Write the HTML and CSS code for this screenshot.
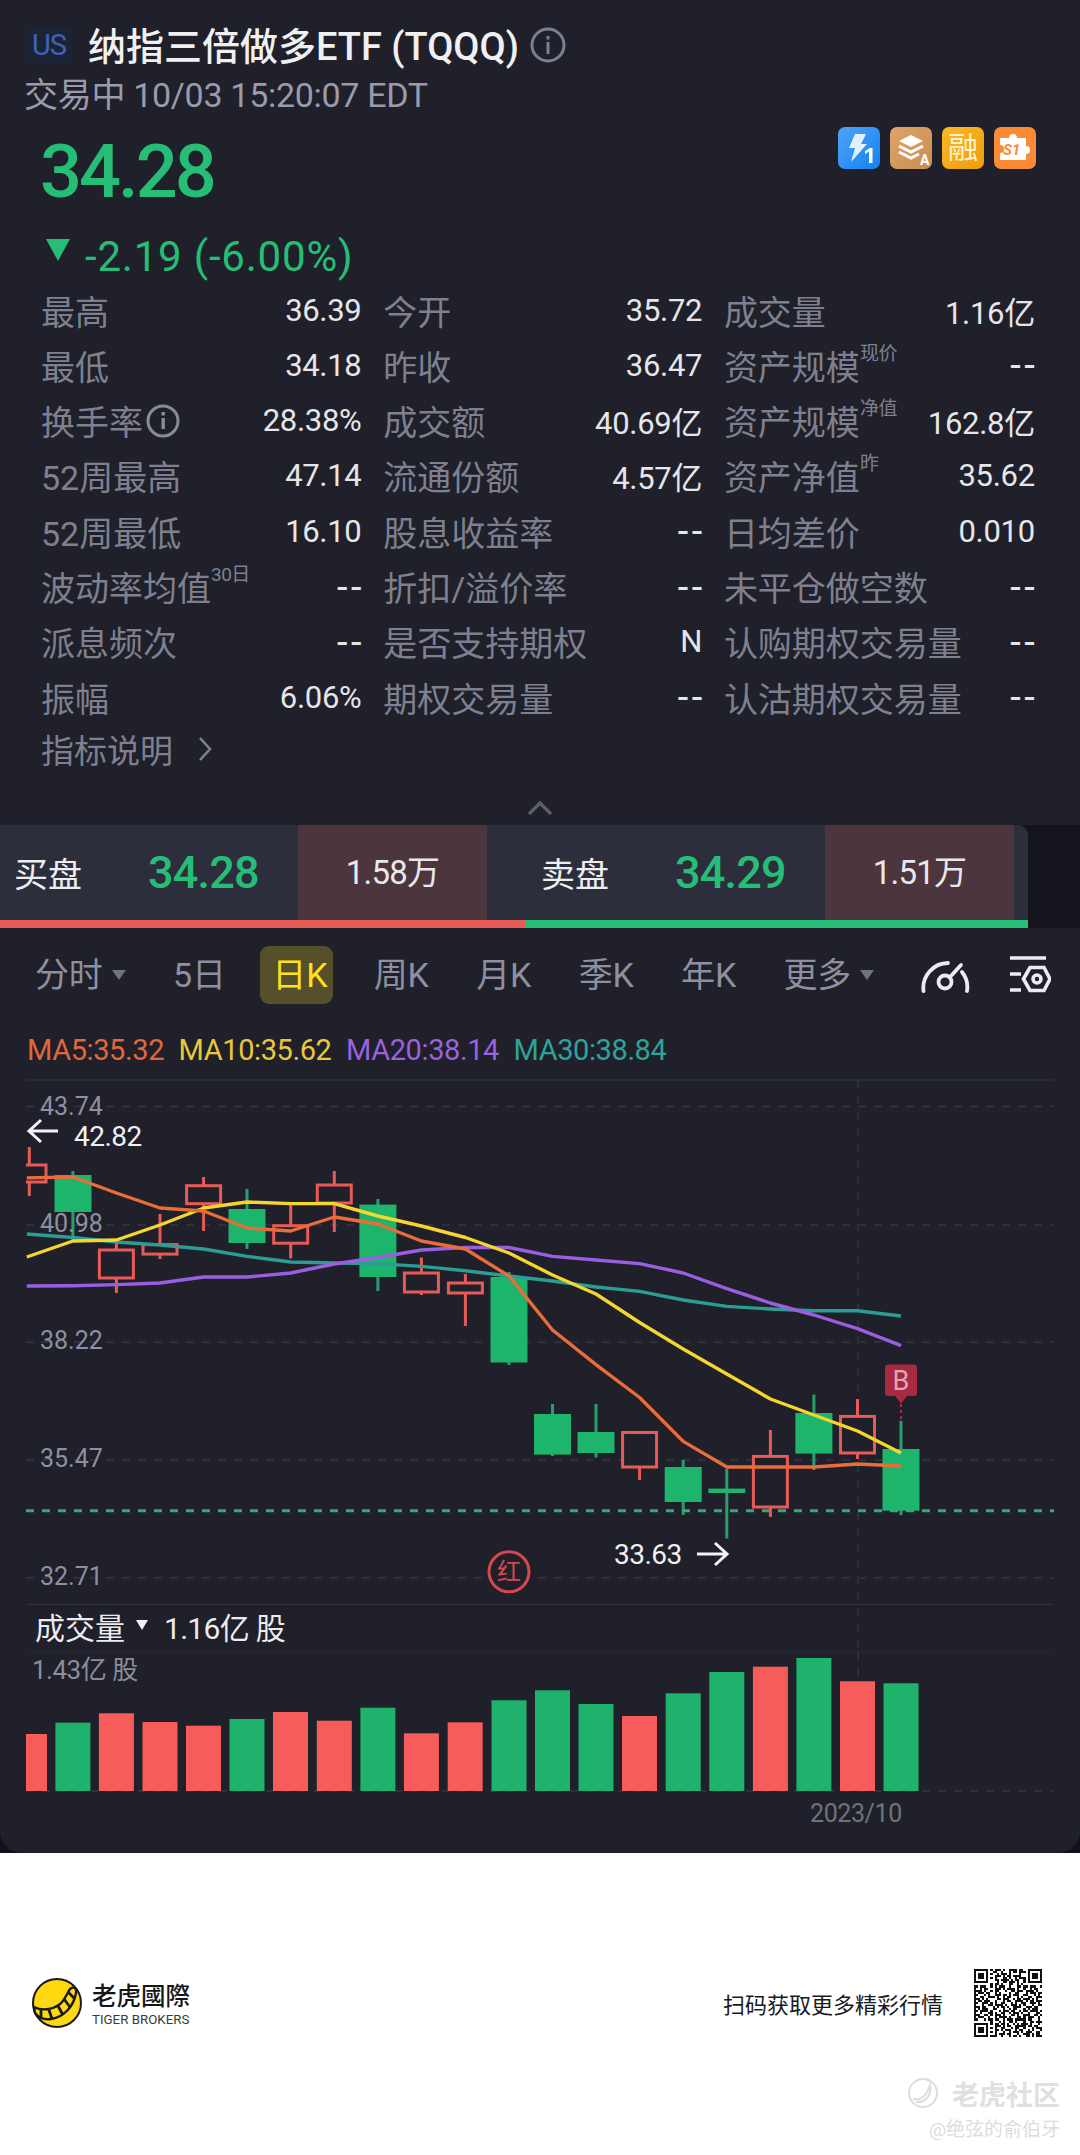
FILE: index.html
```html
<!DOCTYPE html>
<html lang="zh-CN">
<head>
    <meta charset="UTF-8">
    <meta name="viewport" content="width=device-width, initial-scale=1.0">
    <title>TQQQ 行情</title>
    <link rel="stylesheet" href="styles.css">
</head>
<body>
<div class="panel-back">
<div class="panel">
    <div class="title-row">
        <span class="market">US</span>
        <span class="name">纳指三倍做多ETF (TQQQ)</span>
        <svg class="info-big" viewBox="0 0 36 36"><circle cx="18" cy="18" r="16" fill="none" stroke="#7e8091" stroke-width="3"/><rect x="16.5" y="15" width="3" height="12" fill="#7e8091"/><rect x="16.5" y="9" width="3" height="3.5" fill="#7e8091"/></svg>
    </div>
    <div class="sub-row">交易中 10/03 15:20:07 EDT</div>

    <div class="price-row">
        <span class="price">34.28</span>
        <div class="badges">
            <span class="badge badge-blue">
                <svg viewBox="0 0 42 42"><path d="M17 7h11l-5 10h6L13 35l4-14h-6z" fill="#dff0ff"/><rect x="31" y="21" width="3.5" height="15" fill="#fff"/><path d="M27 24l5-3v3l-5 3z" fill="#fff"/></svg>
            </span>
            <span class="badge badge-tan">
                <svg viewBox="0 0 42 42"><path d="M21 8l12 6-12 6-12-6z" fill="#fff"/><path d="M9 19l12 6 12-6M9 25l12 6 8-4" fill="none" stroke="#fff" stroke-width="3"/><text x="30" y="38" class="badge-a">A</text></svg>
            </span>
            <span class="badge badge-gold">融</span>
            <span class="badge badge-orange">
                <svg viewBox="0 0 42 42"><path d="M6 11h9a4 4 0 0 1 8 0h9v8a4 4 0 0 1 0 8v6H6v-7a4 4 0 0 0 0-8z" fill="#fff"/><text x="9" y="28" class="badge-s">S1</text></svg>
            </span>
        </div>
    </div>

    <div class="change-row">
        <svg class="down-mark" viewBox="0 0 24 22"><path d="M0 0h24L12 22z" fill="#26bd77"/></svg>
        <span>-2.19 (-6.00%)</span>
    </div>

    <div class="stats">
        <div class="stat"><span class="lbl">最高</span><span class="val">36.39</span></div>
        <div class="stat"><span class="lbl">今开</span><span class="val">35.72</span></div>
        <div class="stat"><span class="lbl">成交量</span><span class="val">1.16亿</span></div>

        <div class="stat"><span class="lbl">最低</span><span class="val">34.18</span></div>
        <div class="stat"><span class="lbl">昨收</span><span class="val">36.47</span></div>
        <div class="stat"><span class="lbl">资产规模<sup>现价</sup></span><span class="val nil">--</span></div>

        <div class="stat"><span class="lbl lbl-icon">换手率<svg viewBox="0 0 34 34"><circle cx="17" cy="17" r="15" fill="none" stroke="#8a8b99" stroke-width="3"/><rect x="15.5" y="14" width="3.4" height="11" fill="#8a8b99"/><rect x="15.5" y="8" width="3.4" height="3.5" fill="#8a8b99"/></svg></span><span class="val">28.38%</span></div>
        <div class="stat"><span class="lbl">成交额</span><span class="val">40.69亿</span></div>
        <div class="stat"><span class="lbl">资产规模<sup>净值</sup></span><span class="val">162.8亿</span></div>

        <div class="stat"><span class="lbl">52周最高</span><span class="val">47.14</span></div>
        <div class="stat"><span class="lbl">流通份额</span><span class="val">4.57亿</span></div>
        <div class="stat"><span class="lbl">资产净值<sup>昨</sup></span><span class="val">35.62</span></div>

        <div class="stat"><span class="lbl">52周最低</span><span class="val">16.10</span></div>
        <div class="stat"><span class="lbl">股息收益率</span><span class="val nil">--</span></div>
        <div class="stat"><span class="lbl">日均差价</span><span class="val">0.010</span></div>

        <div class="stat"><span class="lbl">波动率均值<sup>30日</sup></span><span class="val nil">--</span></div>
        <div class="stat"><span class="lbl">折扣/溢价率</span><span class="val nil">--</span></div>
        <div class="stat"><span class="lbl">未平仓做空数</span><span class="val nil">--</span></div>

        <div class="stat"><span class="lbl">派息频次</span><span class="val nil">--</span></div>
        <div class="stat"><span class="lbl">是否支持期权</span><span class="val">N</span></div>
        <div class="stat"><span class="lbl">认购期权交易量</span><span class="val nil">--</span></div>

        <div class="stat"><span class="lbl">振幅</span><span class="val">6.06%</span></div>
        <div class="stat"><span class="lbl">期权交易量</span><span class="val nil">--</span></div>
        <div class="stat"><span class="lbl">认沽期权交易量</span><span class="val nil">--</span></div>
    </div>

    <div class="explain">指标说明
        <svg viewBox="0 0 16 26"><path d="M3 2l10 11L3 24" fill="none" stroke="#7e8090" stroke-width="2.6"/></svg>
    </div>

    <svg class="collapse" viewBox="0 0 26 14"><path d="M2 13L13 2l11 11" fill="none" stroke="#5b5d6b" stroke-width="3.4"/></svg>

    <div class="quote-wrap">
        <div class="quote">
            <div class="quote-cells">
                <div class="q-bid"><span class="q-name">买盘</span><span class="q-price">34.28</span></div>
                <div class="q-qty">1.58万</div>
                <div class="q-ask"><span class="q-name">卖盘</span><span class="q-price">34.29</span></div>
                <div class="q-qty q-qty-2">1.51万</div>
            </div>
            <div class="ratio"><span class="ratio-red"></span><span class="ratio-green"></span></div>
        </div>
    </div>

    <div class="tabs">
        <span class="tab">分时<i class="caret"></i></span>
        <span class="tab">5日</span>
        <span class="tab tab-on">日K</span>
        <span class="tab">周K</span>
        <span class="tab">月K</span>
        <span class="tab">季K</span>
        <span class="tab">年K</span>
        <span class="tab">更多<i class="caret"></i></span>
        <svg class="tool-gauge" viewBox="0 0 50 36"><g fill="none" stroke="#ececf0" stroke-width="3.8" stroke-linecap="round"><path d="M3.500 34A25 25 0 0 1 28 6"/><path d="M42 15A24 24 0 0 1 47 34"/><circle cx="25" cy="25" r="6.5"/><path d="M30 20L41 8"/></g></svg>
        <svg class="tool-set" viewBox="0 0 42 37"><g fill="none" stroke="#ececf0" stroke-width="3.6"><path d="M1 2h36M1 18h11M1 34h11"/><path d="M14.500 23L21 11.500h14L41 23l-6 11.500H21z"/><circle cx="28" cy="23" r="4"/></g></svg>
    </div>

    <div class="ma-row">
        <span class="ma5">MA5:35.32</span>
        <span class="ma10">MA10:35.62</span>
        <span class="ma20">MA20:38.14</span>
        <span class="ma30">MA30:38.84</span>
    </div>

    <svg class="chart" viewBox="0 1070 1080 535">
        <g class="grid-solid"><path d="M26 1080H1054M26 1604.500H1054"/></g>
        <g class="grid-dash"><path d="M26 1106.500H1054M26 1225H1054M26 1342H1054M26 1460H1054M26 1578H1054M858 1080V1652"/></g>

        <!-- candles -->
        <g class="wick-dn"><path d="M29.300 1147V1165M29.300 1182V1196M116.400 1242V1293M160 1214V1259M203.600 1177V1231M290.700 1203.600V1258.600M334.300 1171V1232M421.400 1257.500V1295M465.400 1274V1326M639.600 1432V1480M770.400 1430V1517M857.500 1399V1459"/></g>
        <g class="wick-up"><path d="M72.900 1171V1240M247 1189V1249M377.900 1199V1291M509 1272V1365M552.500 1404V1456M596 1404V1457.500M683.200 1460V1515M726.800 1469V1538.600M813.900 1394.600V1470M901 1420.700V1515"/></g>
        <path class="candle-dn" d="M26 1165H46V1182H26"/>
        <g class="candle-dn">
            <rect x="99.400" y="1250" width="34" height="28"/>
            <rect x="143" y="1244.600" width="34" height="9.500"/>
            <rect x="186.600" y="1185.700" width="34" height="18"/>
            <rect x="273.700" y="1225.700" width="34" height="17.500"/>
            <rect x="317.300" y="1185" width="34" height="18"/>
            <rect x="404.400" y="1273" width="34" height="19"/>
            <rect x="448.400" y="1283" width="34" height="10"/>
            <rect x="622.600" y="1432.500" width="34" height="34.500"/>
            <rect x="753.400" y="1456.400" width="34" height="50.600"/>
            <rect x="840.500" y="1416.400" width="34" height="36.600"/>
        </g>
        <g class="candle-up">
            <rect x="54.500" y="1175" width="37" height="37"/>
            <rect x="228.500" y="1209" width="37" height="34"/>
            <rect x="359.400" y="1204.600" width="37" height="72.400"/>
            <rect x="490.500" y="1277" width="37" height="85.500"/>
            <rect x="534" y="1414" width="37" height="40.600"/>
            <rect x="577.500" y="1432" width="37" height="21"/>
            <rect x="664.700" y="1467" width="37" height="35"/>
            <rect x="708.300" y="1488.600" width="37" height="4.400"/>
            <rect x="795.400" y="1413" width="37" height="40.600"/>
            <rect x="882.500" y="1449" width="37" height="61.700"/>
        </g>

        <!-- moving averages -->
        <polyline class="line line-ma30" points="26.800,1234 72.900,1237.500 116.400,1242 160,1245 203.600,1249 247,1256.400 290.700,1262 334.300,1263 377.900,1263.600 421.400,1266.400 465.400,1270.700 509,1276 552.500,1281 596,1287 639.600,1291.400 683.200,1300 726.800,1306.400 770.400,1309 813.900,1310.700 857.500,1310.700 901,1316"/>
        <polyline class="line line-ma20" points="26.800,1286 72.900,1285.700 116.400,1284.600 160,1283 203.600,1277 247,1277 290.700,1273 334.300,1264 377.900,1257.500 421.400,1250 465.400,1247.500 509,1247.500 552.500,1256.400 596,1260 639.600,1263.600 683.200,1273 726.800,1288.600 770.400,1303 813.900,1315 857.500,1328.600 901,1345.700"/>
        <polyline class="line line-ma10" points="26.800,1257 72.900,1241 116.400,1240 160,1225 203.600,1208 247,1202 290.700,1203.600 334.300,1203.600 377.900,1216 421.400,1226 465.400,1237.500 509,1253 552.500,1275 596,1294 639.600,1322.500 683.200,1349 726.800,1374 770.400,1399 813.900,1415 857.500,1431 901,1453"/>
        <polyline class="line line-ma5" points="26.800,1177.900 72.900,1177 116.400,1193 160,1208 203.600,1211 247,1228 290.700,1231 334.300,1217 377.900,1224 421.400,1241 465.400,1249 509,1276 552.500,1330 596,1364.600 639.600,1397.500 683.200,1441.400 726.800,1467 770.400,1467 813.900,1467 857.500,1464 901,1466"/>

        <path class="last-line" d="M26 1510.700H1054"/>

        <text class="axis" x="40" y="1115">43.74</text>
        <text class="axis" x="40" y="1232">40.98</text>
        <text class="axis" x="40" y="1349">38.22</text>
        <text class="axis" x="40" y="1467">35.47</text>
        <text class="axis" x="40" y="1585">32.71</text>

        <path class="arrow" d="M58 1131H30M41 1120L29 1131L41 1142"/>
        <text class="extreme" x="74" y="1146">42.82</text>
        <text class="extreme" x="614" y="1564">33.63</text>
        <path class="arrow" d="M697 1554H726M715 1543L727 1554L715 1565"/>

        <circle class="red-ring" cx="509" cy="1571.800" r="20"/>
        <text class="red-txt" x="509" y="1580" text-anchor="middle">红</text>

        <path class="buy-tick" d="M901 1404V1420"/>
        <path class="buy-mark" d="M888 1364.600H914a3 3 0 0 1 3 3V1393a3 3 0 0 1-3 3H907L901 1403.600L895 1396H888a3 3 0 0 1-3-3V1367.600a3 3 0 0 1 3-3z"/>
        <text class="buy-txt" x="901" y="1390" text-anchor="middle">B</text>
    </svg>

    <div class="vol-head">成交量<i class="vol-caret"></i><span>1.16亿 股</span></div>

    <svg class="vol" viewBox="0 1652 1080 200">
        <g class="vol-dash"><path d="M26 1791H1054M858 1652V1791"/></g>
        <g class="bar-red">
            <rect x="26" y="1734" width="21" height="57"/>
            <rect x="98.900" y="1713.300" width="35" height="77.700"/>
            <rect x="142.500" y="1722" width="35" height="69"/>
            <rect x="186" y="1725.700" width="35" height="65.300"/>
            <rect x="273" y="1712" width="35" height="79"/>
            <rect x="316.800" y="1720.700" width="35" height="70.300"/>
            <rect x="403.900" y="1733.300" width="35" height="57.700"/>
            <rect x="447.700" y="1722.300" width="35" height="68.700"/>
            <rect x="622" y="1716" width="35" height="75"/>
            <rect x="752.900" y="1666.700" width="35" height="124.300"/>
            <rect x="840" y="1681.300" width="35" height="109.700"/>
        </g>
        <g class="bar-green">
            <rect x="55.400" y="1722.700" width="35" height="68.300"/>
            <rect x="229.500" y="1719" width="35" height="72"/>
            <rect x="360.400" y="1707.700" width="35" height="83.300"/>
            <rect x="491.500" y="1700.300" width="35" height="90.700"/>
            <rect x="535" y="1690.300" width="35" height="100.700"/>
            <rect x="578.500" y="1704" width="35" height="87"/>
            <rect x="665.700" y="1693.300" width="35" height="97.700"/>
            <rect x="709.300" y="1672" width="35" height="119"/>
            <rect x="796.400" y="1658" width="35" height="133"/>
            <rect x="883.500" y="1683.300" width="35" height="107.700"/>
        </g>
        <text class="vol-max" x="32" y="1679">1.43亿 股</text>
        <text class="vol-date" x="810" y="1822">2023/10</text>
    </svg>
</div>
</div>

<div class="footer">
    <div class="brand-row">
        <div class="brand">
            <svg class="tiger" viewBox="0 0 50 50">
                <circle cx="25" cy="25" r="24" fill="#ffd80f" stroke="#1a1a1a" stroke-width="2"/>
                <path d="M2 29C10 33 20 32 28 26C33 22 35 15 38 11C42 8 45 10 44 15C42 27 33 39 19 41C13 42 7 40 3 35z" fill="#ffd80f" stroke="#1a1a1a" stroke-width="2.4"/>
                <path d="M9 31V40M17 32L20 41M26 28L31 37M32 21L38 29M36 14L42 20" stroke="#1a1a1a" stroke-width="2.8" fill="none"/>
            </svg>
            <div>
                <div class="brand-cn">老虎國際</div>
                <div class="brand-en">TIGER BROKERS</div>
            </div>
        </div>
        <div class="scan">
            <span>扫码获取更多精彩行情</span>
            <svg class="qr" viewBox="0 0 33 33" shape-rendering="crispEdges">
                <g fill="none" stroke="#111" stroke-width="1">
                    <path d="M0 .5h33" stroke-dasharray="2 1 1 3 2 1 3 1 1 2 4 1 2 2 1 3"/>
                    <path d="M0 1.500h33" stroke-dasharray="1 2 3 1 1 1 2 2 1 3 1 1 2 1 3 2"/>
                    <path d="M0 2.500h33" stroke-dasharray="3 1 1 2 2 2 1 1 3 1 1 4 1 2 1 1"/>
                    <path d="M0 3.500h33" stroke-dasharray="1 1 2 3 1 2 3 1 1 1 2 1 4 2"/>
                    <path d="M0 4.500h33" stroke-dasharray="2 2 1 1 3 1 1 3 2 1 1 2 1 1 3"/>
                    <path d="M0 5.500h33" stroke-dasharray="1 3 2 1 1 2 2 1 4 1 1 1 2 2"/>
                    <path d="M0 6.500h33" stroke-dasharray="3 2 1 1 1 3 1 2 2 1 3 1 1 2"/>
                    <path d="M0 7.500h33" stroke-dasharray="1 1 1 2 4 1 2 1 1 3 2 2 1 1"/>
                    <path d="M0 8.500h33" stroke-dasharray="2 1 3 2 1 1 1 1 3 2 1 3 2 1"/>
                    <path d="M0 9.500h33" stroke-dasharray="1 2 1 1 2 3 3 1 1 1 4 1 1 2"/>
                    <path d="M0 10.500h33" stroke-dasharray="4 1 1 2 1 1 2 3 1 2 2 1 3 1"/>
                    <path d="M0 11.500h33" stroke-dasharray="1 1 3 1 2 2 1 1 1 4 1 2 2 3"/>
                    <path d="M0 12.500h33" stroke-dasharray="2 3 1 1 1 2 3 1 2 1 1 1 3 2"/>
                    <path d="M0 13.500h33" stroke-dasharray="1 2 2 2 3 1 1 2 1 1 2 3 1 1"/>
                    <path d="M0 14.500h33" stroke-dasharray="3 1 1 1 1 4 2 1 3 2 1 1 2 1"/>
                    <path d="M0 15.500h33" stroke-dasharray="1 1 2 1 3 2 1 3 1 1 2 2 4 1"/>
                    <path d="M0 16.500h33" stroke-dasharray="2 2 3 1 1 1 1 2 2 3 1 1 1 2"/>
                    <path d="M0 17.500h33" stroke-dasharray="1 3 1 2 2 1 4 1 1 2 3 1 1 1"/>
                    <path d="M0 18.500h33" stroke-dasharray="3 1 2 3 1 1 1 1 2 1 1 2 4 2"/>
                    <path d="M0 19.500h33" stroke-dasharray="1 1 1 1 3 2 2 3 1 2 1 1 2 3"/>
                    <path d="M0 20.500h33" stroke-dasharray="2 1 4 1 1 3 1 1 3 1 2 2 1 1"/>
                    <path d="M0 21.500h33" stroke-dasharray="1 2 1 3 2 1 1 2 2 2 1 1 3 1"/>
                    <path d="M0 22.500h33" stroke-dasharray="3 2 2 1 1 1 3 1 1 3 2 1 1 2"/>
                    <path d="M0 23.500h33" stroke-dasharray="1 1 3 2 1 2 1 1 4 1 1 3 2 1"/>
                    <path d="M0 24.500h33" stroke-dasharray="2 3 1 1 2 1 2 2 1 1 3 1 5 1"/>
                    <path d="M0 25.500h33" stroke-dasharray="1 2 2 1 3 3 1 1 1 2 2 1 1 3"/>
                    <path d="M0 26.500h33" stroke-dasharray="3 1 1 3 1 1 2 1 2 1 1 2 1 1 1 1"/>
                    <path d="M0 27.500h33" stroke-dasharray="2 1 2 2 1 2 3 1 1 1 2 2 5 1"/>
                    <path d="M0 28.500h33" stroke-dasharray="1 3 1 1 3 1 1 2 2 3 1 1 2 2"/>
                    <path d="M0 29.500h33" stroke-dasharray="2 2 1 1 1 3 2 1 1 1 3 2 1 1"/>
                    <path d="M0 30.500h33" stroke-dasharray="1 1 3 2 2 1 1 3 1 2 1 1 3 1"/>
                    <path d="M0 31.500h33" stroke-dasharray="3 1 1 1 2 2 1 1 3 1 2 3 1 2"/>
                    <path d="M0 32.500h33" stroke-dasharray="1 2 2 1 1 1 3 2 1 3 1 1 2 1"/>
                </g>
                <g class="qr-finder">
                    <rect x="0" y="0" width="8" height="8" fill="#fff"/><rect x=".5" y=".5" width="6" height="6" fill="none" stroke="#111"/><rect x="2" y="2" width="3" height="3" fill="#111"/>
                    <rect x="25" y="0" width="8" height="8" fill="#fff"/><rect x="26.500" y=".5" width="6" height="6" fill="none" stroke="#111"/><rect x="28" y="2" width="3" height="3" fill="#111"/>
                    <rect x="0" y="25" width="8" height="8" fill="#fff"/><rect x=".5" y="26.500" width="6" height="6" fill="none" stroke="#111"/><rect x="2" y="28" width="3" height="3" fill="#111"/>
                </g>
            </svg>
        </div>
    </div>
    <div class="mark-row">
        <svg class="mark-icon" viewBox="0 0 32 32"><g fill="none" stroke="#dcdcdc" stroke-width="2"><circle cx="16" cy="16" r="14"/><path d="M6 22C14 24 20 18 23 8C25 16 20 26 9 25"/></g></svg>
        <span>老虎社区</span>
    </div>
    <div class="mark-user">@绝弦的俞伯牙</div>
</div>
</body>
</html>
```

FILE: styles.css
```css
* {
    box-sizing: border-box;
}
html, body {
    margin: 0;
    padding: 0;
}
body {
    width: 1080px;
    height: 2155px;
    overflow: hidden;
    background: #fff;
    font-family: Roboto, "Noto Sans CJK SC", sans-serif;
}
.panel-back {
    background: #11121a;
}
.panel {
    height: 1853px;
    padding-top: 25px;
    background: #1f2029;
    border-radius: 0 0 22px 22px;
    overflow: hidden;
}

/* header */
.title-row {
    display: flex;
    align-items: center;
    height: 40px;
    padding-left: 25px;
}
.market {
    width: 48px;
    height: 36px;
    line-height: 36px;
    margin-right: 15px;
    text-align: center;
    font-size: 29px;
    color: #3f62b8;
    background: #1c2334;
    border-radius: 4px;
    letter-spacing: -1px;
}
.name {
    margin-top: -3px;
    font-size: 38px;
    font-weight: 500;
    color: #f0f0f3;
    white-space: nowrap;
}
.info-big {
    width: 36px;
    height: 36px;
    margin-left: 11px;
}
.sub-row {
    margin-top: 11px;
    padding-left: 24px;
    height: 39px;
    line-height: 39px;
    font-size: 34px;
    color: #9a9bac;
    letter-spacing: -0.3px;
}
.price-row {
    display: flex;
    justify-content: space-between;
    margin-top: 12px;
    padding: 0 44px 0 40px;
    height: 90px;
}
.price {
    font-size: 74px;
    line-height: 90px;
    font-weight: 500;
    color: #26bd77;
    letter-spacing: -3px;
}
.badges {
    display: flex;
    gap: 10px;
}
.badge {
    display: block;
    width: 42px;
    height: 42px;
    border-radius: 7px;
    overflow: hidden;
}
.badge svg {
    display: block;
    width: 42px;
    height: 42px;
}
.badge-blue {
    background: linear-gradient(135deg, #52a3f5, #1282f5);
}
.badge-tan {
    background: linear-gradient(135deg, #dea468, #c98f52);
}
.badge-gold {
    background: linear-gradient(135deg, #fbb726, #ee9d0c);
    color: #fff3cf;
    font-size: 30px;
    line-height: 42px;
    text-align: center;
}
.badge-orange {
    background: #fb8a36;
}
.badge-a {
    font-size: 14px;
    font-weight: 700;
    fill: #fff;
}
.badge-s {
    font-size: 15px;
    font-weight: 700;
    font-style: italic;
    fill: #fb8a36;
}
.change-row {
    display: flex;
    align-items: center;
    margin-top: 17px;
    height: 44px;
    padding-left: 46px;
    font-size: 42px;
    color: #26bd77;
    letter-spacing: 0.8px;
    white-space: nowrap;
}
.down-mark {
    width: 24px;
    height: 22px;
    margin: -12px 15px 0 0;
}

/* stats table */
.stats {
    display: grid;
    grid-template-columns: 320.5px 319px 311px;
    column-gap: 21.7px;
    grid-auto-rows: 55.3px;
    margin-top: 4.4px;
    padding-left: 41px;
}
.stat {
    display: flex;
    justify-content: space-between;
    align-items: center;
    white-space: nowrap;
}
.lbl {
    font-size: 34px;
    color: #7e8090;
}
.lbl sup {
    font-size: 19px;
    line-height: 0;
    vertical-align: 20px;
    letter-spacing: -0.5px;
}
.lbl-icon {
    display: flex;
    align-items: center;
}
.lbl-icon svg {
    width: 34px;
    height: 34px;
    margin-left: 3px;
}
.val {
    font-size: 31px;
    color: #e6e6ea;
    letter-spacing: -0.3px;
}
.nil {
    font-size: 38px;
    line-height: 1;
    letter-spacing: 3.5px;
    margin-right: -3.5px;
}
.explain {
    display: flex;
    align-items: center;
    margin-top: 4px;
    height: 40px;
    padding-left: 41px;
    font-size: 33px;
    color: #7e8090;
}
.explain svg {
    width: 16px;
    height: 26px;
    margin-left: 24px;
}
.collapse {
    display: block;
    width: 26px;
    height: 14px;
    margin: 32px 0 0 527px;
}

/* bid and ask */
.quote-wrap {
    margin-top: 10px;
    background: #14151c;
    height: 103px;
}
.quote {
    width: 1028px;
}
.quote-cells {
    display: flex;
    height: 95px;
    background: #2d2e3c;
    border-radius: 0 10px 0 0;
}
.q-bid,
.q-ask {
    display: flex;
    align-items: center;
}
.q-bid {
    width: 298px;
    padding-left: 14px;
}
.q-ask {
    width: 338px;
    padding-left: 54px;
}
.q-name {
    width: 134px;
    font-size: 34px;
    color: #eeeef1;
}
.q-price {
    font-size: 45px;
    font-weight: 500;
    color: #26bd77;
    letter-spacing: -0.8px;
}
.q-qty {
    width: 189px;
    line-height: 95px;
    text-align: center;
    font-size: 33px;
    color: #e8e8ec;
    background: #4d353e;
    letter-spacing: -0.8px;
}
.ratio {
    display: flex;
    height: 8px;
}
.ratio-red {
    width: 525px;
    background: #e85a58;
}
.ratio-green {
    flex: 1;
    background: #26bd77;
}

/* period tabs */
.tabs {
    display: flex;
    align-items: center;
    gap: 47.5px;
    margin-top: 18px;
    padding-left: 35px;
    height: 58px;
}
.tab {
    display: flex;
    align-items: center;
    font-size: 34px;
    line-height: 58px;
    color: #8e90a2;
    white-space: nowrap;
    letter-spacing: -0.2px;
}
.tab-on {
    margin: 0 -7px 0 -13px;
    padding: 0 6px 0 12px;
    border-radius: 9px;
    background: #56502a;
    color: #ffe11f;
}
.caret {
    width: 0;
    height: 0;
    margin: 0 0 0 9px;
    border-left: 7px solid transparent;
    border-right: 7px solid transparent;
    border-top: 10px solid #70727f;
}
.tool-gauge {
    width: 50px;
    height: 36px;
    margin: 0 -8px 0 -2px;
}
.tool-set {
    width: 42px;
    height: 37px;
}
.ma-row {
    display: flex;
    gap: 14.5px;
    margin-top: 26px;
    padding-left: 27px;
    height: 40px;
    line-height: 40px;
    font-size: 29px;
    letter-spacing: -0.4px;
    white-space: nowrap;
}
.ma5 { color: #e0683a; }
.ma10 { color: #e9c83c; }
.ma20 { color: #9a62dc; }
.ma30 { color: #2fa39a; }

/* chart */
.chart {
    display: block;
    width: 1080px;
    height: 535px;
    overflow: visible;
}
.grid-solid path {
    fill: none;
    stroke: #2d2e38;
    stroke-width: 1.5;
}
.grid-dash path {
    fill: none;
    stroke: #33343f;
    stroke-width: 1.5;
    stroke-dasharray: 8 8;
}
.wick-dn path {
    stroke: #e85a58;
    stroke-width: 3;
    fill: none;
}
.wick-up path {
    stroke: #2b9c6c;
    stroke-width: 3;
    fill: none;
}
.candle-dn {
    fill: #1f2029;
    stroke: #e85a58;
    stroke-width: 3;
}
.candle-up {
    fill: #1db46c;
}
.line {
    fill: none;
    stroke-width: 3.4;
    stroke-linejoin: round;
}
.line-ma5 { stroke: #ea6c3a; }
.line-ma10 { stroke: #f5d62f; }
.line-ma20 { stroke: #9a5fe0; }
.line-ma30 { stroke: #2b9d94; }
.last-line {
    stroke: #36a87e;
    stroke-width: 3;
    stroke-dasharray: 8 8;
}
.axis {
    font-size: 25px;
    fill: #8e90a2;
}
.extreme {
    font-size: 28px;
    fill: #f0f0f3;
    letter-spacing: -0.5px;
}
.arrow {
    fill: none;
    stroke: #f4f4f6;
    stroke-width: 3;
}
.red-ring {
    fill: #1f2029;
    stroke: #d9474c;
    stroke-width: 3;
}
.red-txt {
    font-size: 24px;
    fill: #d9474c;
}
.buy-tick {
    stroke: #a82a40;
    stroke-width: 2;
    stroke-dasharray: 3 3;
}
.buy-mark {
    fill: #a82a40;
}
.buy-txt {
    font-size: 27px;
    fill: #dfa7b2;
}

/* volume */
.vol-head {
    display: flex;
    align-items: center;
    height: 47px;
    margin: 0 26px;
    padding: 0 0 3px 9px;
    font-size: 30px;
    color: #ececf0;
    border-bottom: 1px solid #27282f;
}
.vol-head span {
    letter-spacing: -0.7px;
}
.vol-caret {
    width: 0;
    height: 0;
    margin: -2px 16px 0 11px;
    border-left: 6px solid transparent;
    border-right: 6px solid transparent;
    border-top: 10px solid #f0f0f3;
}
.vol {
    display: block;
    width: 1080px;
    height: 200px;
}
.vol-dash path {
    fill: none;
    stroke: #33343f;
    stroke-width: 1.5;
    stroke-dasharray: 8 8;
}
.bar-red { fill: #f65c5a; }
.bar-green { fill: #1fb26d; }
.vol-max {
    font-size: 26px;
    fill: #8b8d9d;
    letter-spacing: -0.5px;
}
.vol-date {
    font-size: 25px;
    fill: #70727f;
    letter-spacing: -0.4px;
}

/* footer */
.footer {
    height: 302px;
    background: #fff;
    padding-top: 116px;
}
.brand-row {
    display: flex;
    justify-content: space-between;
    align-items: center;
    height: 68px;
    padding: 0 38px 0 32px;
}
.brand {
    display: flex;
    align-items: center;
    gap: 10px;
}
.tiger {
    width: 50px;
    height: 50px;
}
.brand-cn {
    font-size: 24.5px;
    line-height: 33px;
    font-weight: 500;
    color: #16161a;
}
.brand-en {
    font-size: 13.3px;
    line-height: 14px;
    color: #3a3a3e;
}
.scan {
    display: flex;
    align-items: center;
    gap: 31px;
    font-size: 22px;
    color: #1a1a1d;
}
.qr {
    width: 68px;
    height: 68px;
}
.mark-row {
    display: flex;
    justify-content: flex-end;
    align-items: center;
    gap: 13px;
    height: 30px;
    margin-top: 41px;
    padding-right: 20px;
    font-size: 27px;
    font-weight: 700;
    color: #e0e0e0;
}
.mark-icon {
    width: 32px;
    height: 32px;
}
.mark-user {
    margin-top: 7px;
    padding-right: 20px;
    text-align: right;
    font-size: 19px;
    line-height: 30px;
    color: #dddddd;
}
```
